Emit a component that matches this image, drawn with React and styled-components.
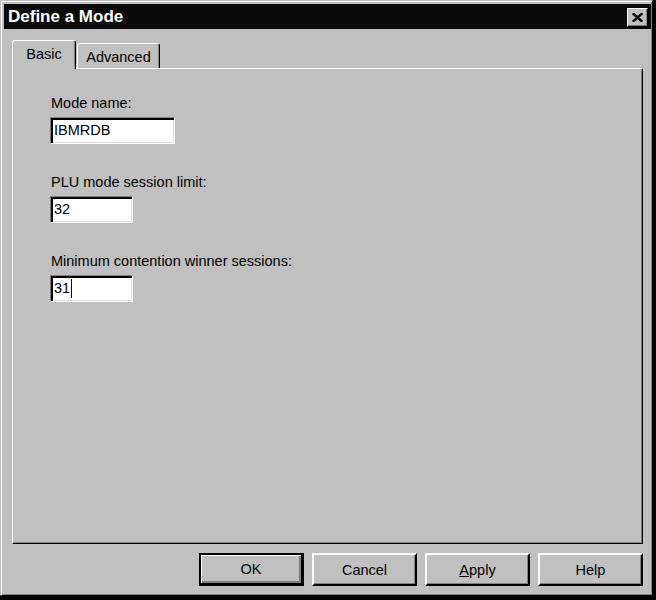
import React from "react";
import styled, { createGlobalStyle } from "styled-components";

const GlobalStyle = createGlobalStyle`
  html, body {
    margin: 0;
    padding: 0;
    background: #000;
  }
  body {
    font-family: "Liberation Sans", Arial, sans-serif;
    font-size: 14.5px;
    color: #000;
  }
`;

const Window = styled.div`
  box-sizing: border-box;
  width: 653px;
  height: 596px;
  background: #c0c0c0;
  border: 1px solid;
  border-color: #c0c0c0 #000 #000 #c0c0c0;
  box-shadow: inset 1px 1px 0 #fff, inset -1px -1px 0 #808080;
  padding: 3px 1px 0 3px;
  display: flex;
  flex-direction: column;
`;

const TitleBar = styled.div`
  height: 25px;
  background: #0a0a0a;
  display: flex;
  align-items: center;
  justify-content: space-between;
  padding: 0 3px 0 4px;
`;

const Title = styled.span`
  color: #fff;
  font-weight: bold;
  font-size: 17px;
  line-height: 25px;
`;

const CloseButton = styled.div`
  box-sizing: border-box;
  width: 21px;
  height: 19px;
  margin-top: 1px;
  background: #c0c0c0;
  border: 1px solid;
  border-color: #fff #000 #000 #fff;
  box-shadow: inset -1px -1px 0 #808080;
  display: flex;
  align-items: center;
  justify-content: center;
`;

const Body = styled.div`
  flex: 1;
  display: flex;
  flex-direction: column;
  padding: 11px 8px 0 8px;
`;

const TabStrip = styled.div`
  height: 28px;
  display: flex;
  align-items: flex-end;
`;

const Tab = styled.div`
  box-sizing: border-box;
  width: ${(p) => p.$w}px;
  height: ${(p) => (p.$active ? 29 : 25)}px;
  margin-bottom: ${(p) => (p.$active ? -1 : 0)}px;
  margin-left: ${(p) => (p.$active ? 0 : 1)}px;
  border: 1px solid;
  border-bottom: none;
  border-color: #fff #000 transparent #fff;
  border-radius: 3px 3px 0 0;
  box-shadow: inset -1px 0 0 #808080;
  background: #c0c0c0;
  padding-top: 5px;
  line-height: 17px;
  text-align: center;
  position: relative;
  z-index: ${(p) => (p.$active ? 1 : 0)};
`;

const Panel = styled.div`
  box-sizing: border-box;
  height: 476px;
  border: 1px solid;
  border-color: #fff #000 #000 #fff;
  box-shadow: inset -1px -1px 0 #808080;
  padding: 26px 0 0 37px;
  display: flex;
  flex-direction: column;
  gap: 30px;
`;

const Field = styled.div`
  display: flex;
  flex-direction: column;
  align-items: flex-start;
  gap: 5px;
`;

const Label = styled.label`
  line-height: 17px;
  padding-left: 1px;
`;

const TextBox = styled.div`
  box-sizing: border-box;
  width: ${(p) => p.$w}px;
  height: 27px;
  background: #fff;
  border: 1px solid;
  border-color: #808080 #fff #fff #808080;
  box-shadow: inset 2px 2px 0 #000, inset -1px -1px 0 #dfdfdf;
  padding: 0 3px;
  display: flex;
  align-items: center;
  line-height: 17px;
`;

const Caret = styled.span`
  display: inline-block;
  width: 1px;
  height: 19px;
  background: #000;
  margin-left: 1px;
`;

const ButtonRow = styled.div`
  display: flex;
  justify-content: flex-end;
  gap: 8px;
  margin-top: 9px;
`;

const Button = styled.button`
  box-sizing: border-box;
  width: 105px;
  height: 33px;
  padding: 0;
  background: #c0c0c0;
  font-family: inherit;
  font-size: 14.5px;
  color: #000;
  cursor: default;
  border-style: solid;
  border-width: ${(p) => (p.$default ? "2px 3px 3px 2px" : "2px")};
  border-color: ${(p) =>
    p.$default ? "#000" : "#fff #000 #000 #fff"};
  box-shadow: ${(p) =>
    p.$default
      ? "inset 1px 1px 0 #fff, inset -2px -2px 0 #808080"
      : "inset -1px -1px 0 #808080"};
  outline: none;
`;

const Mnemonic = styled.span`
  text-decoration: underline;
`;

const fields = [
  { label: "Mode name:", value: "IBMRDB", width: 125 },
  { label: "PLU mode session limit:", value: "32", width: 83 },
  { label: "Minimum contention winner sessions:", value: "31", width: 83, caret: true },
];

export default function App() {
  return (
    <>
      <GlobalStyle />
      <Window>
        <TitleBar>
          <Title>Define a Mode</Title>
          <CloseButton>
            <svg width="11" height="9" viewBox="0 0 11 9">
              <path
                d="M1.5 1 L9.5 8 M9.5 1 L1.5 8"
                stroke="#000"
                strokeWidth="2.4"
                strokeLinecap="square"
                fill="none"
              />
            </svg>
          </CloseButton>
        </TitleBar>
        <Body>
          <TabStrip>
            <Tab $active $w={64}>Basic</Tab>
            <Tab $w={83}>Advanced</Tab>
          </TabStrip>
          <Panel>
            {fields.map((f) => (
              <Field key={f.label}>
                <Label>{f.label}</Label>
                <TextBox $w={f.width}>
                  {f.value}
                  {f.caret && <Caret />}
                </TextBox>
              </Field>
            ))}
          </Panel>
          <ButtonRow>
            <Button $default>OK</Button>
            <Button>Cancel</Button>
            <Button>
              <Mnemonic>A</Mnemonic>pply
            </Button>
            <Button>Help</Button>
          </ButtonRow>
        </Body>
      </Window>
    </>
  );
}
